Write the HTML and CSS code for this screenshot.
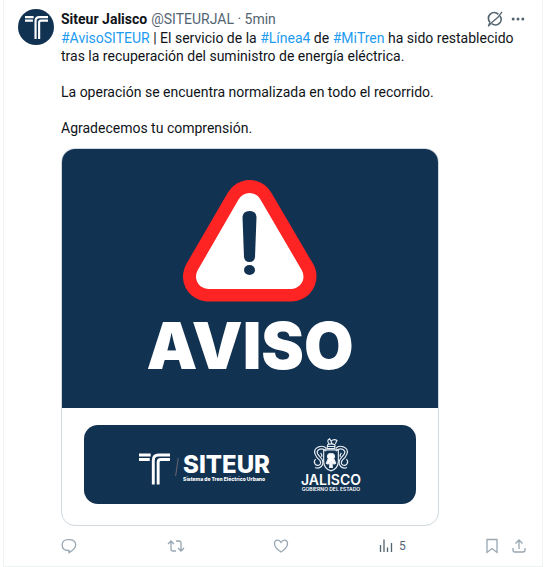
FILE: index.html
```html
<!DOCTYPE html>
<html lang="es">
<head>
<meta charset="utf-8">
<meta name="viewport" content="width=device-width, initial-scale=1">
<title>Siteur Jalisco</title>
<link rel="stylesheet" href="styles.css">
</head>
<body>
<svg class="defs" aria-hidden="true">
  <symbol id="tren" viewBox="0 0 96 96">
    <g fill="none" stroke="currentColor" stroke-width="9">
      <path d="M0 5H36M0 19H33"/>
      <path d="M44 96V21Q44 5 60 5H96"/>
      <path d="M59 96V27Q59 19 67 19H96"/>
    </g>
  </symbol>
</svg>
<article class="post">
  <a class="avatar" href="#" aria-label="Siteur Jalisco"><svg><use href="#tren"/></svg></a>
  <div class="content">
    <header class="head">
      <a class="name" href="#">Siteur Jalisco</a>
      <span class="meta">@SITEURJAL · 5min</span>
      <button class="icon grok" aria-label="Grok">
        <svg width="16" height="16" viewBox="0 0 16 16" fill="none" stroke="currentColor" stroke-width="1.7"><path d="M11.3 3.3A5.7 5.7 0 0 0 3 11.2M4.8 12.7A5.7 5.7 0 0 0 13 4.9"/><path d="M15 .8 11 6.2 5.6 10.7M3 11.2 1.3 15.2 5.5 10.6" stroke-width="1.3"/></svg>
      </button>
      <button class="icon" aria-label="Más opciones">
        <svg width="14" height="16" viewBox="0 0 14 16" fill="currentColor"><circle cx="2.2" cy="8" r="1.5"/><circle cx="7" cy="8" r="1.5"/><circle cx="11.8" cy="8" r="1.5"/></svg>
      </button>
    </header>
    <div class="text">
      <p><a href="#">#AvisoSITEUR</a> | El servicio de la <a href="#">#Línea4</a> de <a href="#">#MiTren</a> ha sido restablecido tras la recuperación del suministro de energía eléctrica.</p>
      <p>La operación se encuentra normalizada en todo el recorrido.</p>
      <p>Agradecemos tu comprensión.</p>
    </div>
    <figure class="media">
      <div class="notice">
        <svg class="warning" viewBox="0 0 134 122" aria-hidden="true">
          <path d="M66.500 25 25 96.500H108.500Z" fill="#ff2424" stroke="#ff2424" stroke-width="50" stroke-linejoin="round"/>
          <path d="M66.500 25.500 25.500 96.500H108Z" fill="#fff" stroke="#fff" stroke-width="25" stroke-linejoin="round"/>
          <path d="M59.500 37Q60 31 66.500 31T73.500 37L72 77Q71.500 82 66.500 82T61 77Z" fill="#123252"/>
          <ellipse cx="66.500" cy="90" rx="5.500" ry="5" fill="#123252"/>
        </svg>
        <strong class="aviso">AVISO</strong>
      </div>
      <figcaption class="brands">
        <svg class="tren"><use href="#tren"/></svg>
        <svg class="slash" viewBox="0 0 4 20"><path d="M3.500 0 .5 20" stroke="#766b72"/></svg>
        <div class="siteur"><b>SITEUR</b><small>Sistema de Tren Eléctrico Urbano</small></div>
        <div class="jalisco">
          <svg class="crest" viewBox="0 0 114 104" fill="none" stroke="#e9eef3" stroke-width="3.500" aria-hidden="true">
            <path d="M35 38V72Q35 94 57 101 79 94 79 72V38Z"/>
            <path d="M43 34Q34 24 20 29 4 36 9 50 13 61 23 69 29 77 23 83 15 88 9 80 4 72 11 66M43 42Q31 32 21 37 12 43 18 52L29 65Q37 79 28 88 20 96 9 91M26 47Q31 53 29 59"/>
            <path d="M71 34Q80 24 94 29 110 36 105 50 101 61 91 69 85 77 91 83 99 88 105 80 110 72 103 66M71 42Q83 32 93 37 102 43 96 52L85 65Q77 79 86 88 94 96 105 91M88 47Q83 53 85 59"/>
            <path d="M45 34 47 23Q57 17 69 23L68 34ZM45 28H69M51 20Q43 10 53 5L57 12Q66 4 75 10L70 20M57 12 61 22"/>
            <path d="M57 50C48 47 43 58 49 64L43 78Q48 84 54 76L53 91H61L60 76Q66 84 71 78L65 64C71 58 66 47 57 50Z" fill="#fff"/>
          </svg>
          <b>JALISCO</b><small>GOBIERNO DEL ESTADO</small>
        </div>
      </figcaption>
    </figure>
    <footer class="actions">
      <button class="icon" aria-label="Responder"><svg width="16" height="16" viewBox="0 0 16 16"><path d="M7.300 12.500C3.500 12.500 1.200 10.200 1.200 7S3.600 1.600 7 1.600H9Q14.700 2 14.700 7C14.700 10 12.500 12 8 14.700V12.500Z"/></svg></button>
      <button class="icon" aria-label="Repostear"><svg width="18" height="16" viewBox="0 0 18 16"><path d="M1 6 4 3 7 6M4 3V11Q4 13 6 13H9M9 3H12Q14 3 14 5V13M11 10 14 13 17 10"/></svg></button>
      <button class="icon" aria-label="Me gusta"><svg width="16" height="16" viewBox="0 0 16 16"><path d="M8 14C4 11.500 1.500 8.500 1.500 5.500 1.500 1.500 6 1 8 4.500 10 1 14.500 1.500 14.500 5.500 14.500 8.500 12 11.500 8 14Z"/></svg></button>
      <button class="icon views" aria-label="5 visualizaciones"><svg width="14" height="16" viewBox="0 0 14 16"><path d="M1.500 14V7M5 14V1.500M8.500 14V9.500M12.500 14V5"/></svg>5</button>
      <div class="tail">
        <button class="icon" aria-label="Guardar"><svg width="14" height="16" viewBox="0 0 14 16"><path d="M2 1.500H12V14.500L7 10.500 2 14.500Z"/></svg></button>
        <button class="icon" aria-label="Compartir"><svg width="16" height="16" viewBox="0 0 16 16"><path d="M8 11V2M4.500 5.500 8 2 11.500 5.500M2 10V12Q2 14 4 14H12Q14 14 14 12V10"/></svg></button>
      </div>
    </footer>
  </div>
</article>
</body>
</html>
```
FILE: styles.css
```css
* { box-sizing: border-box; }
body { margin: 0; background: #fff; color: #0f1419; font: 14px/18px Roboto, "Liberation Sans", sans-serif; }
a { color: #1d9bf0; text-decoration: none; }
svg { display: block; }
.defs { display: none; }
.post { display: flex; gap: 7px; margin: 0 1px 0 3px; padding: 9px 17px 13px 14px; border: solid #eff3f4; border-width: 0 1px 1px; }
.avatar { display: grid; place-items: center; flex: none; width: 36px; height: 36px; border-radius: 50%; background: #123252; color: #fff; }
.avatar svg { width: 23px; height: 23px; }
.content { flex: 1; min-width: 0; }
.head { display: flex; align-items: center; height: 20px; gap: 4px; }
.name { color: #0f1419; font-weight: 700; }
.meta { flex: 1; color: #536471; }
.icon { display: flex; align-items: center; padding: 0; border: 0; background: none; color: #536471; font: inherit; }
.grok { margin-right: 4px; }
.text p { margin: 0 0 18px; }
.text p:last-child { margin-bottom: 11px; }
.media { display: flex; flex-direction: column; max-width: 378px; margin: 0; border: 1px solid #cfd9de; border-radius: 14px; overflow: hidden; background: #fff; }
.notice { display: flex; flex-direction: column; align-items: center; padding: 31px 0 30px; background: #123252; color: #fff; }
.warning { width: 134px; height: 122px; }
.aviso { margin-top: 12px; font: 900 64px/64px Inter, sans-serif; }
.brands { display: flex; align-items: center; height: 79px; margin: 17px 22px 21px; padding: 0 55px; border-radius: 14px; background: #123252; color: #fff; }
.tren { width: 32px; height: 32px; margin-top: 8px; }
.slash { width: 4px; height: 18px; margin: 4px 4px 0 5px; }
.siteur, .jalisco { display: flex; flex-direction: column; white-space: nowrap; font-family: Inter, sans-serif; }
.siteur { width: 88px; margin-top: 8px; }
.siteur b { font-size: 24px; line-height: 20px; font-weight: 800; }
.siteur small { font-size: 5px; line-height: 8px; font-weight: 800; }
.jalisco { align-items: center; margin-left: 31px; }
.crest { width: 38px; height: 35px; }
.jalisco b { font-size: 14px; line-height: 15px; font-weight: 600; }
.jalisco small { font-size: 5px; line-height: 5px; font-weight: 600; }
.actions { display: grid; grid-template-columns: repeat(4, 106px) 1fr; align-items: center; height: 16px; margin-top: 11px; }
.actions svg { fill: none; stroke: currentColor; stroke-width: 1.3; }
.actions .icon { color: #98a7b2; }
.actions .views { gap: 6px; color: #536471; font-size: 12px; }
.tail { display: flex; justify-content: flex-end; gap: 12px; }
```
